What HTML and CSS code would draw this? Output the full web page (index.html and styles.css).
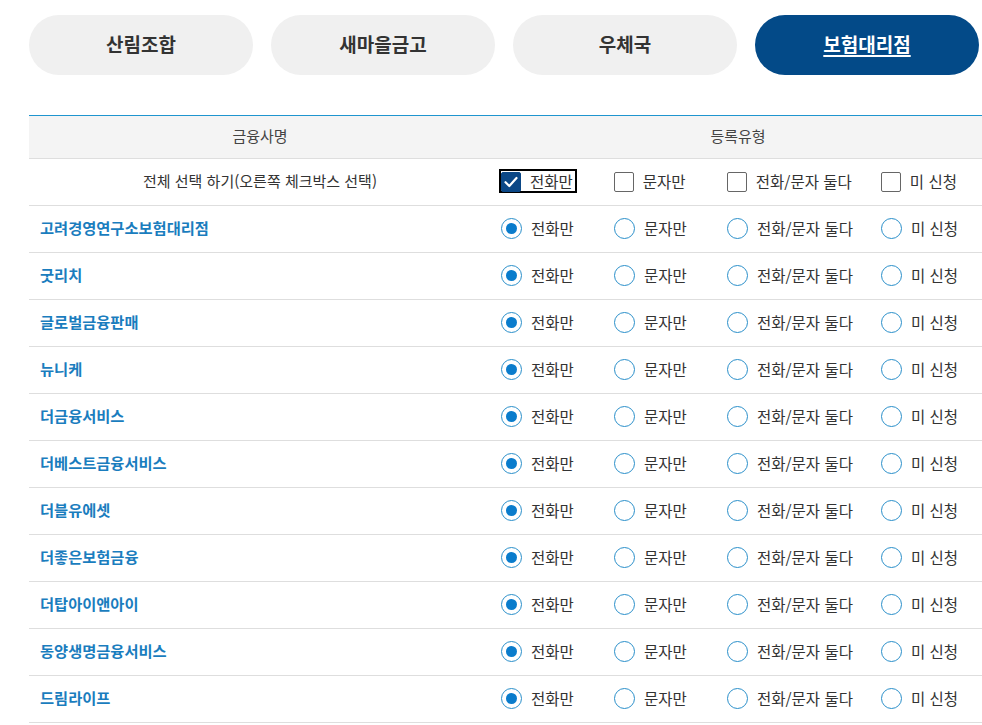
FILE: index.html
```html
<!DOCTYPE html>
<html lang="ko">
<head>
<meta charset="utf-8">
<title>보험대리점</title>
<link rel="stylesheet" href="styles.css">
</head>
<body>
<div class="page">
  <nav class="tabs">
    <a class="tab">산림조합</a>
    <a class="tab">새마을금고</a>
    <a class="tab">우체국</a>
    <a class="tab active">보험대리점</a>
  </nav>

  <div class="table">
    <div class="row head">
      <div class="c-name">금융사명</div>
      <div class="c-type">등록유형</div>
    </div>
    <div class="row all">
      <div class="c-name center">전체 선택 하기(오른쪽 체크박스 선택)</div>
      <div class="c-type opts">
        <label class="opt o1 focused"><span class="chk on"><svg viewBox="0 0 20 20" width="20" height="20"><path d="M4.5 10.2l3.8 3.8 7.2-8" fill="none" stroke="#fff" stroke-width="2.2" stroke-linecap="round" stroke-linejoin="round"/></svg></span>전화만</label>
        <label class="opt o2"><span class="chk"></span>문자만</label>
        <label class="opt o3"><span class="chk"></span>전화/문자 둘다</label>
        <label class="opt o4"><span class="chk"></span>미 신청</label>
      </div>
    </div>
    <div class="row"><div class="c-name link">고려경영연구소보험대리점</div><div class="c-type opts"><label class="opt o1"><span class="rad on"></span>전화만</label><label class="opt o2"><span class="rad"></span>문자만</label><label class="opt o3"><span class="rad"></span>전화/문자 둘다</label><label class="opt o4"><span class="rad"></span>미 신청</label></div></div>
    <div class="row"><div class="c-name link">굿리치</div><div class="c-type opts"><label class="opt o1"><span class="rad on"></span>전화만</label><label class="opt o2"><span class="rad"></span>문자만</label><label class="opt o3"><span class="rad"></span>전화/문자 둘다</label><label class="opt o4"><span class="rad"></span>미 신청</label></div></div>
    <div class="row"><div class="c-name link">글로벌금융판매</div><div class="c-type opts"><label class="opt o1"><span class="rad on"></span>전화만</label><label class="opt o2"><span class="rad"></span>문자만</label><label class="opt o3"><span class="rad"></span>전화/문자 둘다</label><label class="opt o4"><span class="rad"></span>미 신청</label></div></div>
    <div class="row"><div class="c-name link">뉴니케</div><div class="c-type opts"><label class="opt o1"><span class="rad on"></span>전화만</label><label class="opt o2"><span class="rad"></span>문자만</label><label class="opt o3"><span class="rad"></span>전화/문자 둘다</label><label class="opt o4"><span class="rad"></span>미 신청</label></div></div>
    <div class="row"><div class="c-name link">더금융서비스</div><div class="c-type opts"><label class="opt o1"><span class="rad on"></span>전화만</label><label class="opt o2"><span class="rad"></span>문자만</label><label class="opt o3"><span class="rad"></span>전화/문자 둘다</label><label class="opt o4"><span class="rad"></span>미 신청</label></div></div>
    <div class="row"><div class="c-name link">더베스트금융서비스</div><div class="c-type opts"><label class="opt o1"><span class="rad on"></span>전화만</label><label class="opt o2"><span class="rad"></span>문자만</label><label class="opt o3"><span class="rad"></span>전화/문자 둘다</label><label class="opt o4"><span class="rad"></span>미 신청</label></div></div>
    <div class="row"><div class="c-name link">더블유에셋</div><div class="c-type opts"><label class="opt o1"><span class="rad on"></span>전화만</label><label class="opt o2"><span class="rad"></span>문자만</label><label class="opt o3"><span class="rad"></span>전화/문자 둘다</label><label class="opt o4"><span class="rad"></span>미 신청</label></div></div>
    <div class="row"><div class="c-name link">더좋은보험금융</div><div class="c-type opts"><label class="opt o1"><span class="rad on"></span>전화만</label><label class="opt o2"><span class="rad"></span>문자만</label><label class="opt o3"><span class="rad"></span>전화/문자 둘다</label><label class="opt o4"><span class="rad"></span>미 신청</label></div></div>
    <div class="row"><div class="c-name link">더탑아이앤아이</div><div class="c-type opts"><label class="opt o1"><span class="rad on"></span>전화만</label><label class="opt o2"><span class="rad"></span>문자만</label><label class="opt o3"><span class="rad"></span>전화/문자 둘다</label><label class="opt o4"><span class="rad"></span>미 신청</label></div></div>
    <div class="row"><div class="c-name link">동양생명금융서비스</div><div class="c-type opts"><label class="opt o1"><span class="rad on"></span>전화만</label><label class="opt o2"><span class="rad"></span>문자만</label><label class="opt o3"><span class="rad"></span>전화/문자 둘다</label><label class="opt o4"><span class="rad"></span>미 신청</label></div></div>
    <div class="row"><div class="c-name link">드림라이프</div><div class="c-type opts"><label class="opt o1"><span class="rad on"></span>전화만</label><label class="opt o2"><span class="rad"></span>문자만</label><label class="opt o3"><span class="rad"></span>전화/문자 둘다</label><label class="opt o4"><span class="rad"></span>미 신청</label></div></div>
  </div>
</div>
</body>
</html>
```

FILE: styles.css
```css
html, body {
  margin: 0;
  padding: 0;
  background: #fff;
  overflow: hidden;
}
body {
  font-family: "Noto Sans CJK KR", "Noto Sans", "Liberation Sans", sans-serif;
  color: #333;
  font-size: 15px;
}
.page {
  padding: 15px 0 0 29px;
  width: 960px;
}
.tabs {
  display: flex;
  gap: 18px;
}
.tab {
  width: 224px;
  height: 60px;
  box-sizing: border-box;
  padding-bottom: 3px;
  border-radius: 30px;
  background: #f0f0f0;
  color: #333;
  font-size: 19px;
  font-weight: 700;
  display: flex;
  align-items: center;
  justify-content: center;
}
.tab.active {
  background: #034a88;
  color: #fff;
  text-decoration: underline;
  text-underline-offset: 3px;
  text-decoration-thickness: 1.5px;
}
.table {
  margin-top: 40px;
  width: 956px;
  border-top: 1px solid #1f95cf;
}
.row {
  display: flex;
  height: 46px;
  border-bottom: 1px solid #dedede;
  align-items: center;
}
.row.head {
  height: 42px;
  background: #f4f4f4;
  color: #444;
}
.c-name, .c-type {
  position: relative;
  top: -2px;
}
.c-name {
  width: 462px;
  flex: none;
  box-sizing: border-box;
  padding-left: 11px;
}
.head .c-name, .head .c-type, .c-name.center {
  text-align: center;
  padding-left: 0;
}
.c-type {
  flex: 1;
}
.link {
  color: #1a7dbe;
  font-weight: 700;
  font-size: 15.3px;
}
.opts {
  display: flex;
  align-items: center;
  padding-left: 10px;
  top: -1px;
}
.opt {
  display: flex;
  align-items: center;
  gap: 9px;
  color: #333;
  font-size: 15.5px;
  flex: none;
  line-height: 20px;
}
.o1 { width: 113px; }
.o2 { width: 113px; }
.o3 { width: 154px; }
.opt.focused {
  width: auto;
  margin-right: 39px;
  outline: 2px solid #000;
  outline-offset: 0;
  padding-right: 2px;
  height: 20px;
}
.chk {
  width: 20px;
  height: 20px;
  box-sizing: border-box;
  border: 1px solid #666;
  border-radius: 2px;
  background: #fff;
  flex: none;
  display: block;
  position: relative;
  top: 1px;
}
.chk svg { display: block; margin: -1px; }
.chk.on {
  background: #0b4786;
  border-color: #0b4786;
}
.rad {
  width: 21px;
  height: 21px;
  box-sizing: border-box;
  border: 1.5px solid #2a8fca;
  border-radius: 50%;
  background: #fff;
  flex: none;
  position: relative;
  top: 0.5px;
}
.rad.on::after {
  content: "";
  position: absolute;
  left: 50%;
  top: 50%;
  width: 11px;
  height: 11px;
  margin: -5.5px 0 0 -5.5px;
  border-radius: 50%;
  background: #0a7ccc;
}
```
